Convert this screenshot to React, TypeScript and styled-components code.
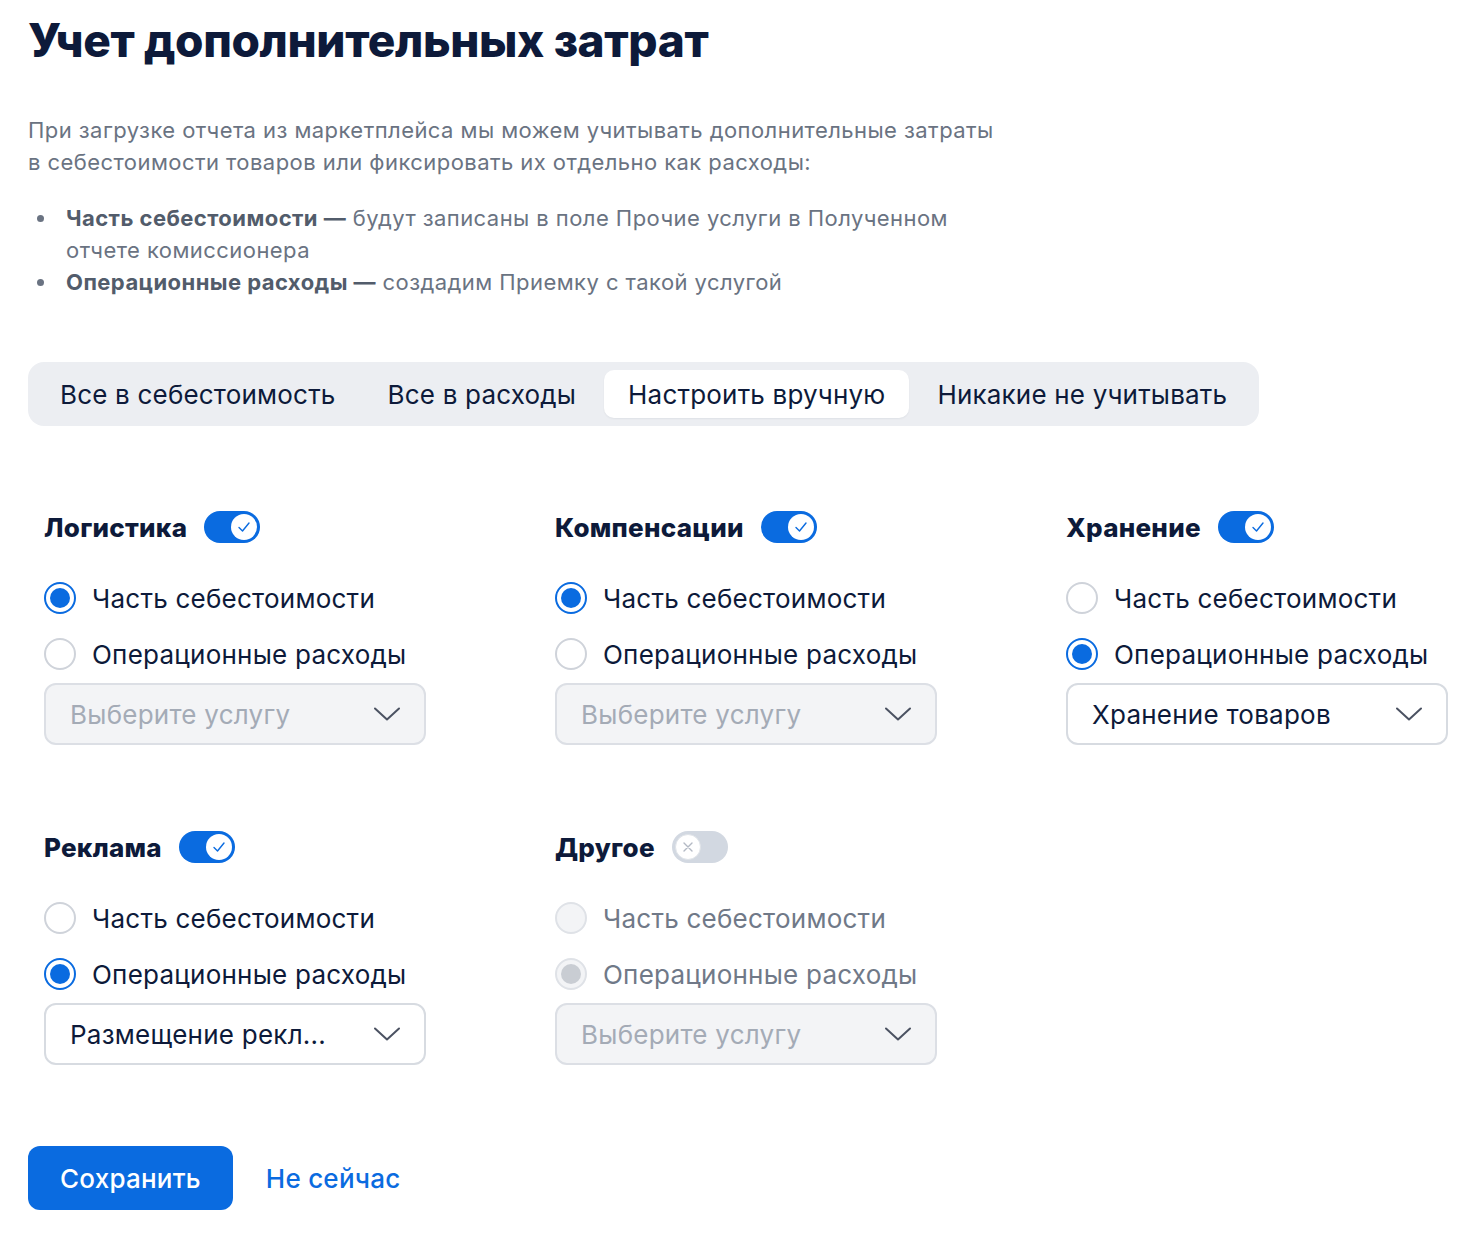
import React from 'react';
import styled, {createGlobalStyle} from "styled-components";

const GlobalStyle = createGlobalStyle`
  body {
    margin: 0;
    background: #ffffff;
    font-family: Inter, "Noto Sans", sans-serif;
    color: #0d1a3a;
  }
`

type Choice = 'cost' | 'ops'

type SectionType = {
    title: string
    enabled: boolean
    choice: Choice
    service?: string
}

const sections: SectionType[] = [
    {title: 'Логистика', enabled: true, choice: 'cost'},
    {title: 'Компенсации', enabled: true, choice: 'cost'},
    {title: 'Хранение', enabled: true, choice: 'ops', service: 'Хранение товаров'},
    {title: 'Реклама', enabled: true, choice: 'ops', service: 'Размещение рекл...'},
    {title: 'Другое', enabled: false, choice: 'ops'},
]

const tabs = ['Все в себестоимость', 'Все в расходы', 'Настроить вручную', 'Никакие не учитывать']

const Chevron = () => (
    <svg width="26" height="14" viewBox="0 0 26 14" fill="none">
        <polyline points="1,1.5 13,12.5 25,1.5" stroke="#4b5262" strokeWidth="2" strokeLinecap="round" strokeLinejoin="round"/>
    </svg>
)

const Switch = ({on}: { on: boolean }) => (
    <Track $on={on}>
        <Knob $on={on}>
            {on ? (
                <svg width="14" height="14" viewBox="0 0 14 14" fill="none">
                    <polyline points="2,7.5 5.5,11 12,3" stroke="#0a6be0" strokeWidth="1.4" strokeLinecap="round" strokeLinejoin="round"/>
                </svg>
            ) : (
                <svg width="12" height="12" viewBox="0 0 12 12" fill="none">
                    <path d="M2 2 L10 10 M10 2 L2 10" stroke="#b3b9c4" strokeWidth="1.4" strokeLinecap="round"/>
                </svg>
            )}
        </Knob>
    </Track>
)

const Section = ({title, enabled, choice, service}: SectionType) => {
    return (
        <StyledSection>
            <Heading>
                <HeadingText>{title}</HeadingText>
                <Switch on={enabled}/>
            </Heading>
            <Radios>
                <RadioRow $disabled={!enabled}>
                    <Radio $checked={choice === 'cost'} $disabled={!enabled}/>
                    Часть себестоимости
                </RadioRow>
                <RadioRow $disabled={!enabled}>
                    <Radio $checked={choice === 'ops'} $disabled={!enabled}/>
                    Операционные расходы
                </RadioRow>
            </Radios>
            <Select $disabled={!service}>
                <SelectText $placeholder={!service}>{service ?? 'Выберите услугу'}</SelectText>
                <Chevron/>
            </Select>
        </StyledSection>
    )
}

export default function App() {
    return (
        <Page>
            <GlobalStyle/>
            <Title>Учет дополнительных затрат</Title>
            <Description>
                При загрузке отчета из маркетплейса мы можем учитывать дополнительные затраты<br/>
                в себестоимости товаров или фиксировать их отдельно как расходы:
            </Description>
            <List>
                <Item><b>Часть себестоимости —</b> будут записаны в поле Прочие услуги в Полученном отчете комиссионера</Item>
                <Item><b>Операционные расходы —</b> создадим Приемку с такой услугой</Item>
            </List>
            <Segmented>
                {tabs.map(t => <Tab key={t} $active={t === 'Настроить вручную'}>{t}</Tab>)}
            </Segmented>
            <Grid>
                {sections.map(s => <Section key={s.title} {...s}/>)}
            </Grid>
            <Actions>
                <PrimaryButton>Сохранить</PrimaryButton>
                <LinkButton>Не сейчас</LinkButton>
            </Actions>
        </Page>
    )
}

const Page = styled.div`
  padding: 12px 28px 38px;
  letter-spacing: 0.015em;
`
const Title = styled.h1`
  margin: 0;
  font-size: 46px;
  line-height: 56px;
  font-weight: 800;
  letter-spacing: -0.4px;
  color: #0d1a3a;
`
const Description = styled.p`
  margin: 46px 0 0;
  font-size: 22px;
  line-height: 32px;
  letter-spacing: 0.02em;
  color: #6a7382;
`
const List = styled.ul`
  margin: 24px 0 0;
  padding-left: 38px;
  max-width: 910px;
  list-style: none;
  font-size: 22px;
  line-height: 32px;
  letter-spacing: 0.02em;
  color: #6a7382;

  b {
    color: #525c6b;
    font-weight: 700;
  }
`
const Item = styled.li`
  position: relative;

  &::before {
    content: '';
    position: absolute;
    left: -29px;
    top: 13px;
    width: 7px;
    height: 7px;
    border-radius: 50%;
    background: #6a7382;
  }
`
const Segmented = styled.div`
  display: inline-flex;
  gap: 4px;
  margin-top: 64px;
  padding: 8px;
  border-radius: 16px;
  background: #eceef2;
  letter-spacing: 0.012em;
`
const Tab = styled.div<{ $active?: boolean }>`
  height: 48px;
  padding: 0 24px;
  display: flex;
  align-items: center;
  border-radius: 10px;
  font-size: 26px;
  color: #0d1a3a;
  background: ${p => p.$active ? '#ffffff' : 'transparent'};
  box-shadow: ${p => p.$active ? '0 1px 2px rgba(13, 26, 58, 0.06)' : 'none'};
`
const Grid = styled.div`
  display: grid;
  grid-template-columns: repeat(3, 382px);
  column-gap: 129px;
  row-gap: 86px;
  margin: 85px 0 0 16px;
`
const StyledSection = styled.div`
  display: flex;
  flex-direction: column;
`
const Heading = styled.div`
  display: flex;
  align-items: center;
  gap: 17px;
  height: 32px;
`
const HeadingText = styled.span`
  font-size: 26px;
  font-weight: 800;
  letter-spacing: 0.01em;
  color: #0d1a3a;
`
const Track = styled.div<{ $on: boolean }>`
  width: 56px;
  height: 32px;
  border-radius: 16px;
  box-sizing: border-box;
  padding: 3px;
  display: flex;
  justify-content: ${p => p.$on ? 'flex-end' : 'flex-start'};
  background: ${p => p.$on ? '#0a6be0' : '#d2d8e1'};
`
const Knob = styled.div<{ $on: boolean }>`
  width: 26px;
  height: 26px;
  border-radius: 50%;
  box-sizing: border-box;
  background: #ffffff;
  border: ${p => p.$on ? 'none' : '1px solid #dfe3e8'};
  display: flex;
  align-items: center;
  justify-content: center;
`
const Radios = styled.div`
  display: flex;
  flex-direction: column;
  gap: 16px;
  margin-top: 35px;
`
const RadioRow = styled.label<{ $disabled: boolean }>`
  display: flex;
  align-items: center;
  gap: 16px;
  height: 40px;
  font-size: 26px;
  white-space: nowrap;
  color: ${p => p.$disabled ? '#707988' : '#0d1a3a'};
`
const Radio = styled.span<{ $checked: boolean, $disabled: boolean }>`
  flex: none;
  width: 32px;
  height: 32px;
  box-sizing: border-box;
  border-radius: 50%;
  border: 2px solid ${p => p.$disabled ? '#dfe2e7' : p.$checked ? '#0a6be0' : '#cfd3da'};
  background: ${p => p.$disabled ? '#f3f4f6' : '#ffffff'};
  display: flex;
  align-items: center;
  justify-content: center;

  &::after {
    content: '';
    display: ${p => p.$checked ? 'block' : 'none'};
    width: 20px;
    height: 20px;
    border-radius: 50%;
    background: ${p => p.$disabled ? '#c9cdd3' : '#0a6be0'};
  }
`
const Select = styled.div<{ $disabled: boolean }>`
  margin-top: 9px;
  height: 62px;
  box-sizing: border-box;
  border: 2px solid ${p => p.$disabled ? '#dcdfe5' : '#d7dbe1'};
  border-radius: 12px;
  background: ${p => p.$disabled ? '#f3f4f6' : '#ffffff'};
  display: flex;
  align-items: center;
  justify-content: space-between;
  padding: 0 24px 0 24px;
`
const SelectText = styled.span<{ $placeholder: boolean }>`
  font-size: 26px;
  color: ${p => p.$placeholder ? '#a4abb6' : '#0d1a3a'};
`
const Actions = styled.div`
  display: flex;
  align-items: center;
  gap: 33px;
  margin-top: 81px;
`
const PrimaryButton = styled.button`
  height: 64px;
  padding: 0 32px;
  border: none;
  border-radius: 12px;
  background: #0a6be0;
  color: #ffffff;
  font-family: inherit;
  font-size: 26px;
  font-weight: 500;
  letter-spacing: inherit;
`
const LinkButton = styled.button`
  border: none;
  background: none;
  padding: 0;
  color: #0a6be0;
  font-family: inherit;
  font-size: 26px;
  font-weight: 500;
  letter-spacing: inherit;
`
